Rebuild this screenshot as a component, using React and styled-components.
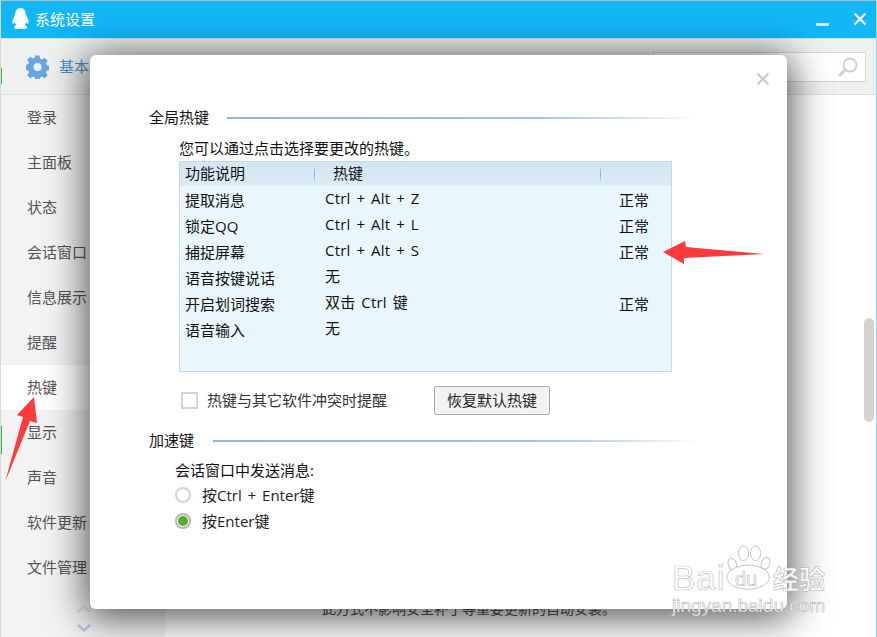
import React from "react";
import styled, { createGlobalStyle } from "styled-components";

const Global = createGlobalStyle`
  html, body { margin: 0; padding: 0; background: #fff; }
  * { box-sizing: border-box; }
  body { font-family: "Open Sans", "Noto Sans CJK SC", sans-serif; font-size: 15px; }
`;
const Page = styled.div`
  position: relative; width: 877px; height: 637px; overflow: hidden;
  display: flex; flex-direction: column; background: #fff;
  border-top: 1px solid #b9b9b5; border-left: 1px solid #d9dad5; border-right: 1px solid #8fd8f6;
`;
const TitleBar = styled.header`
  height: 37px; flex: none; background: #12b7f8; color: #fff;
  display: flex; align-items: center; padding: 0 9px 1px 11px;
`;
const Title = styled.span`margin-left: 6px; flex: 1; line-height: 20px;`;
const WinButtons = styled.div`display: flex; align-items: center; gap: 23px;`;
const Toolbar = styled.div`
  height: 57px; flex: none; background: #eff0f0; border-top: 1px solid #cfe8f2; border-bottom: 1px solid #dedede;
  display: flex; align-items: center; padding: 0 10px 0 25px;
`;
const ToolLabel = styled.span`margin-left: 10px; padding-bottom: 2px; color: #4a8fc6; flex: 1;`;
const Search = styled.div`
  width: 213px; height: 30px; background: #fff; border: 1px solid #d5d5d5;
  display: flex; align-items: center; justify-content: flex-end; padding-right: 6px;
`;
const Body = styled.div`flex: 1; display: flex; min-height: 0;`;
const Sidebar = styled.nav`width: 164px; flex: none; background: #f3f3f3; display: flex; flex-direction: column;`;
const NavItem = styled.div`
  height: 45px; flex: none; display: flex; align-items: center; padding: 0 0 2px 26px;
  color: #555; background: ${p => (p.$active ? "#fff" : "transparent")};
`;
const Chevrons = styled.div`display: flex; flex-direction: column; gap: 11px; padding: 15px 0 0 76px;`;
const Content = styled.main`flex: 1; display: flex; align-items: flex-end; padding: 0 0 18px 157px; color: #555; font-size: 14px; line-height: 20px;`;
const ScrollTrack = styled.div`width: 13px; flex: none; padding: 223px 2px 0 1px;`;
const ScrollThumb = styled.div`width: 10px; height: 104px; background: #d3d3d3; border-radius: 5px;`;
const DesktopPeek = styled.div`
  position: absolute; left: -1px; top: ${p => p.$top}px; width: 2px; height: ${p => p.$h}px;
  background: #3fb53a; border-radius: 0 2px 2px 0; z-index: 1;
`;
const Modal = styled.section`
  position: absolute; left: 89px; top: 54px; width: 697px; height: 554px;
  background: #fff; border-radius: 6px; box-shadow: 0 5px 38px 4px rgba(0,0,0,.68);
  padding: 53px 87px 0 59px; color: #111;
`;
const ModalClose = styled.svg`position: absolute; right: 17px; top: 17px;`;
const SectionHead = styled.div`
  display: flex; align-items: center; height: 20px; gap: ${p => p.$gap}px;
  margin-top: ${p => p.$mt || 0}px; line-height: 20px;
`;
const SectionLabel = styled.span`padding-bottom: 2px;`;
const Rule = styled.div`
  flex: 1; height: 2px;
  background: linear-gradient(90deg, #8fb5da 0%, #a3c2e0 65%, #cfe0ef 85%, rgba(255,255,255,0) 100%);
`;
const Indented = styled.div`padding-left: 30px;`;
const Intro = styled.div`margin-top: 10px; height: 20px; line-height: 20px;`;
const Table = styled.div`
  margin-top: 3px; width: 493px; height: 211px; background: #e9f6fb; border: 1px solid #c3dae8;
`;
const HeadRow = styled.div`
  height: 24px; display: grid; grid-template-columns: 135px 286px 1fr; align-items: center;
  background: linear-gradient(180deg, #d2e5f1, #dcecf5);
`;
const HeadCell = styled.div`
  height: 100%; display: flex; align-items: center; padding: 0 0 3px ${p => p.$pad || 0}px; position: relative;
  &::before {
    content: ""; display: ${p => (p.$divider ? "block" : "none")}; position: absolute; left: -1px; top: 3px; bottom: 3px; width: 1px;
    background: linear-gradient(180deg, transparent, #74aed8, transparent);
  }
`;
const Row = styled.div`
  height: 26px; display: grid; grid-template-columns: 140px 294px 1fr; padding: 0 0 2px 5px; align-items: center;
  &:first-of-type { margin-top: 2px; }
`;
const NameCell = styled.div`white-space: nowrap; line-height: 20px;`;
const KeyCell = styled.div`padding-bottom: 4px; height: 24px; white-space: nowrap; line-height: 20px; letter-spacing: .2px; word-spacing: 1.8px;`;
const Rows = styled.div``;
const Options = styled.div`margin-top: 14px; height: 29px; display: flex; align-items: center; padding-left: 2px;`;
const Checkbox = styled.span`width: 17px; height: 17px; border: 2px solid #d4d4d4; background: #fff; flex: none;`;
const CheckLabel = styled.span`margin-left: 9px; padding-bottom: 2px; width: 180px; color: #333; white-space: nowrap;`;
const Button = styled.button`
  margin-left: 47px; width: 116px; height: 29px; padding: 0 0 2px; background: #f2f2f2; border: 1px solid #adadad; border-radius: 2px;
  font: inherit; color: #222;
`;
const AccelBlock = styled.div`padding-left: 26px;`;
const AccelIntro = styled.div`margin-top: 9px; height: 20px; line-height: 20px;`;
const RadioList = styled.div`margin-top: 2px;`;
const RadioRow = styled.div`height: 26px; display: flex; align-items: center; gap: 11px; color: #222;`;
const RadioLabel = styled.span`padding-bottom: 2px; word-spacing: 2px;`;
const Radio = styled.span`
  width: 16px; height: 16px; border-radius: 50%; border: 2px solid ${p => (p.$on ? "#b5b5b5" : "#d5d5d5")}; background: #fff;
  flex: none; display: flex; align-items: center; justify-content: center;
  &::after { content: ""; width: 10px; height: 10px; border-radius: 50%; background: ${p => (p.$on ? "#55ad2e" : "transparent")}; }
`;
const Arrow = styled.svg`position: absolute; left: 0; top: 0; pointer-events: none;`;
const Watermark = styled.div`
  position: absolute; left: 671px; top: 541px; width: 160px; height: 76px;
  color: rgba(255,255,255,.88); -webkit-text-stroke: .7px rgba(170,170,170,.75); font-family: "Liberation Sans", sans-serif;
`;
const MarkTop = styled.div`display: flex; align-items: flex-end; height: 52px;`;
const MarkBai = styled.span`font-size: 35px; line-height: 32px; width: 53px; letter-spacing: 1px;`;
const MarkPaw = styled.div`position: relative; width: 48px; height: 52px; flex: none;`;
const MarkDu = styled.span`position: absolute; left: 10px; bottom: 3px; font-size: 20px; line-height: 24px;`;
const MarkCn = styled.span`font-family: "Noto Sans CJK SC", sans-serif; font-weight: 700; font-size: 26px; line-height: 32px; white-space: nowrap;`;
const MarkUrl = styled.div`font-size: 19px; line-height: 24px; white-space: nowrap;`;

const nav = ["登录", "主面板", "状态", "会话窗口", "信息展示", "提醒", "热键", "显示", "声音", "软件更新", "文件管理"];
const rows = [
  ["提取消息", "Ctrl + Alt + Z", "正常"],
  ["锁定QQ", "Ctrl + Alt + L", "正常"],
  ["捕捉屏幕", "Ctrl + Alt + S", "正常"],
  ["语音按键说话", "无", ""],
  ["开启划词搜索", "双击 Ctrl 键", "正常"],
  ["语音输入", "无", ""],
];

const Penguin = () => (
  <svg width="17" height="22" viewBox="0 0 17 22" fill="#fff">
    <path d="M8.5 0C4.6 0 3.3 3.2 3.2 6.6 2 9 .5 11.6.4 14c-.1 1.600.5 2 1.300 1.400l1-1.200c.3 1.100.9 2 1.700 2.800-1 .4-2.400 1.100-2.400 2.300 0 1.800 3 1.900 4.200 1.700.8-.2 1.300-.6 1.800-.6h1c.5 0 1 .4 1.800.6 1.200.2 4.200.1 4.200-1.700 0-1.200-1.400-1.900-2.400-2.300.8-.8 1.400-1.700 1.700-2.800l1 1.200c.8.6 1.400.2 1.300-1.400-.1-2.400-1.600-5-2.800-7.400C13.700 3.200 12.400 0 8.500 0z" />
  </svg>
);
const Gear = () => (
  <svg width="23" height="24" viewBox="0 0 24 24">
    <path fill="#67a6e0" fillRule="evenodd" d="M9.800 0h4.400l.7 3.300 1.800.8 2.900-1.800 3.100 3.100-1.800 2.900.8 1.800 3.300.7v4.400l-3.300.7-.8 1.800 1.800 2.900-3.100 3.100-2.900-1.800-1.800.8-.7 3.300H9.800l-.7-3.300-1.800-.8-2.900 1.800-3.100-3.100 1.800-2.900-.8-1.800L-1 14.200V9.800l3.300-.7.8-1.800-1.800-2.900 3.100-3.100 2.900 1.800 1.800-.8zM12 7.800a4.200 4.200 0 1 0 0 8.400 4.200 4.200 0 0 0 0-8.400z" />
  </svg>
);

export default function App() {
  return (
    <>
      <Global />
      <Page>
        <TitleBar>
          <Penguin />
          <Title>系统设置</Title>
          <WinButtons>
            <svg width="15" height="16" viewBox="0 0 15 16"><path d="M1 13.500h13" stroke="#e4f6fe" strokeWidth="2.600" /></svg>
            <svg width="14" height="14" viewBox="0 0 14 14"><path d="M1.500 1.500l11 11M12.500 1.500l-11 11" stroke="#eef9fe" strokeWidth="2.400" /></svg>
          </WinButtons>
        </TitleBar>
        <Toolbar>
          <Gear />
          <ToolLabel>基本设置</ToolLabel>
          <Search>
            <svg width="22" height="22" viewBox="0 0 22 22" fill="none" stroke="#cfcfcf">
              <circle cx="13" cy="9" r="6.500" strokeWidth="1.800" />
              <path d="M8 14l-6 6" strokeWidth="3" />
            </svg>
          </Search>
        </Toolbar>
        <Body>
          <Sidebar>
            {nav.map(n => <NavItem key={n} $active={n === "热键"}>{n}</NavItem>)}
            <Chevrons>
              <svg width="14" height="8" viewBox="0 0 14 8" fill="none" stroke="#d7e0ec" strokeWidth="2.500"><path d="M1 7l6-5.500L13 7" /></svg>
              <svg width="14" height="8" viewBox="0 0 14 8" fill="none" stroke="#b8cbe2" strokeWidth="2.500"><path d="M1 1l6 5.500L13 1" /></svg>
            </Chevrons>
          </Sidebar>
          <Content>此方式不影响安全补丁等重要更新的自动安装。</Content>
          <ScrollTrack><ScrollThumb /></ScrollTrack>
        </Body>
        <DesktopPeek $top={66} $h={18} />
        <DesktopPeek $top={424} $h={30} />
        <Modal>
          <ModalClose width="14" height="14" viewBox="0 0 14 14"><path d="M1.500 1.500l11 11M12.500 1.500l-11 11" stroke="#cdcdcd" strokeWidth="2.400" /></ModalClose>
          <SectionHead $gap={18}><SectionLabel>全局热键</SectionLabel><Rule /></SectionHead>
          <Indented>
            <Intro>您可以通过点击选择要更改的热键。</Intro>
            <Table>
              <HeadRow>
                <HeadCell $pad={5}>功能说明</HeadCell>
                <HeadCell $pad={18} $divider>热键</HeadCell>
                <HeadCell $divider />
              </HeadRow>
              <Rows>
                {rows.map(r => (
                  <Row key={r[0]}>
                    <NameCell>{r[0]}</NameCell>
                    <KeyCell>{r[1]}</KeyCell>
                    <NameCell>{r[2]}</NameCell>
                  </Row>
                ))}
              </Rows>
            </Table>
            <Options>
              <Checkbox />
              <CheckLabel>热键与其它软件冲突时提醒</CheckLabel>
              <Button>恢复默认热键</Button>
            </Options>
          </Indented>
          <SectionHead $gap={19} $mt={16}><SectionLabel>加速键</SectionLabel><Rule /></SectionHead>
          <AccelBlock>
            <AccelIntro>会话窗口中发送消息:</AccelIntro>
            <RadioList>
              <RadioRow><Radio /><RadioLabel>按Ctrl + Enter键</RadioLabel></RadioRow>
              <RadioRow><Radio $on /><RadioLabel>按Enter键</RadioLabel></RadioRow>
            </RadioList>
          </AccelBlock>
        </Modal>
        <Arrow width="877" height="637" viewBox="0 0 877 637">
          <path fill="#fd3a3c" d="M662 251L684 240L685 246L763 253L683 257L683 263Z" />
          <path fill="#fd3a3c" d="M33 396L16 414L22 416L4 481L29 420L36 422Z" />
        </Arrow>
        <Watermark>
          <MarkTop>
            <MarkBai>Bai</MarkBai>
            <MarkPaw>
              <svg width="48" height="52" viewBox="0 0 52 52" fill="rgba(255,255,255,.8)" stroke="rgba(170,170,170,.75)">
                <ellipse cx="8" cy="22" rx="4.500" ry="6.500" transform="rotate(-20 8 22)" />
                <ellipse cx="20" cy="10" rx="5.500" ry="8" />
                <ellipse cx="33" cy="10" rx="5.500" ry="8" />
                <ellipse cx="44" cy="21" rx="4.500" ry="6.500" transform="rotate(20 44 21)" />
                <ellipse cx="25" cy="36" rx="23" ry="13" />
              </svg>
              <MarkDu>du</MarkDu>
            </MarkPaw>
            <MarkCn>经验</MarkCn>
          </MarkTop>
          <MarkUrl>jingyan.baidu.com</MarkUrl>
        </Watermark>
      </Page>
    </>
  );
}
